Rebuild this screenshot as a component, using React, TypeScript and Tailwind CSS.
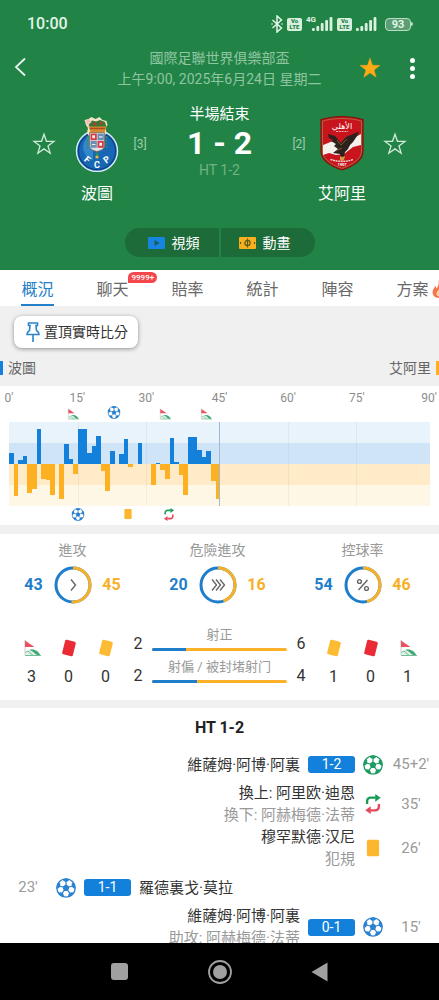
import type { ReactNode } from 'react';

const BLUE = '#1380db';
const AMBER = '#fdb022';

const point = (r: number, deg: number) => {
  const a = ((deg - 90) * Math.PI) / 180;
  return `${(12 + r * Math.cos(a)).toFixed(2)},${(12 + r * Math.sin(a)).toFixed(2)}`;
};

const FIVE = [0, 72, 144, 216, 288];

function Ball({ color, className }: { color: string; className: string }) {
  return (
    <svg viewBox="0 0 24 24" className={className} aria-hidden="true">
      <circle cx="12" cy="12" r="11" fill="#fff" stroke={color} strokeWidth="1.6" />
      <polygon points={FIVE.map((d) => point(4.4, d)).join(' ')} fill={color} />
      {FIVE.map((d) => (
        <g key={d}>
          <polyline points={`${point(4, d)} ${point(8, d)}`} stroke={color} strokeWidth="1.4" fill="none" />
          <polygon
            points={[point(11.4, d - 22), point(8.8, d - 19), point(7.2, d), point(8.8, d + 19), point(11.4, d + 22), point(11.6, d)].join(' ')}
            fill={color}
          />
        </g>
      ))}
    </svg>
  );
}

function Corner({ className }: { className: string }) {
  return (
    <svg viewBox="0 0 18 18" className={className} aria-hidden="true">
      <path d="M2 1v15" stroke="#c9c9c9" strokeWidth="1" />
      <path d="M2 1.5 11.5 8H2z" fill="#e9535f" />
      <path d="M2 16c1-4 4-5.500 7-5.500 4 0 7 2.500 8 6z" fill="#dff0e6" />
      <path d="M6 11c5-1.500 9.500 1 11.500 5.500-2 0-4-.5-5.500-2S9 11.500 6 11z" fill="#3fa873" />
      <path d="M2.500 13.500 5 12l5 4.500M2 16.500h16" stroke="#6fbf95" strokeWidth="1" fill="none" />
    </svg>
  );
}

function Card({ color, className, tilted = false }: { color: string; className: string; tilted?: boolean }) {
  return (
    <svg viewBox="0 0 18 18" className={className} aria-hidden="true">
      <rect x="3.500" y="1.500" width="11" height="15" rx="1.500" fill={color} transform={tilted ? 'rotate(14 9 9)' : undefined} />
    </svg>
  );
}

function Swap({ className }: { className: string }) {
  return (
    <svg viewBox="0 0 20 22" className={className} fill="none" strokeWidth="2.600" aria-hidden="true">
      <path d="M3.500 11V8a4 4 0 0 1 4-4H13" stroke="#199a57" />
      <path d="M12.500 0 18.500 4l-6 4.500z" fill="#199a57" />
      <path d="M16.500 11v3a4 4 0 0 1-4 4H7" stroke="#e54858" />
      <path d="M7.500 13.500 1.500 18l6 4z" fill="#e54858" />
    </svg>
  );
}

function Star({ filled = false }: { filled?: boolean }) {
  return (
    <svg viewBox="0 0 24 24" className="size-6" aria-hidden="true">
      <path
        d="M12 2.200l2.450 7.100 7.500.15-5.980 4.530 2.170 7.180L12 16.870l-6.140 4.290 2.170-7.180L2.050 9.450l7.500-.15z"
        fill={filled ? '#ffa914' : 'none'}
        stroke={filled ? '#ffa914' : '#d3ebdb'}
        strokeWidth={filled ? 0.5 : 1.3}
      />
    </svg>
  );
}

function PortoCrest() {
  return (
    <svg viewBox="0 0 44 56" className="h-14 w-11" role="img" aria-label="波圖">
      <circle cx="22" cy="35" r="20.500" fill="#1767b4" stroke="#d8ecf6" strokeWidth="1.400" />
      <circle cx="22" cy="35" r="18.500" fill="none" stroke="#0d3f86" strokeWidth="1.200" />
      <path d="M8 30a15 15 0 0 1 10-12v26C12 43 8 37 8 30z" fill="#3c93d4" opacity=".75" />
      <path d="M11 9 9.500 4l4-1 3-2 4 2 4-2 3 3 4 1 1 4-2 3 1 5-2 3H14l-2-3 1-5z" fill="#f2e6c6" />
      <path d="M13.500 9 17 4.500l4 1 4-1.500 5 2 1.500 5H15z" fill="#3f7436" />
      <path d="M10 5l4-2 2.500 3L13 9z" fill="#eec0b6" />
      <circle cx="20" cy="8" r="1.300" fill="#c5362e" />
      <circle cx="26" cy="7" r="1.300" fill="#c5362e" />
      <path d="M13.500 10.500h18l-2 6h-14z" fill="#d98a30" />
      <path d="M15 12.500h15" stroke="#a84f1e" strokeWidth="1.500" />
      <path d="M14.500 16.500h15v13c0 3-3 5-7.500 6-4.500-1-7.500-3-7.500-6z" fill="#dfe3e6" stroke="#8a6f45" strokeWidth=".8" />
      <path d="M15.500 17.500h6.300v6.800h-6.300zM22.500 25h6.300v6.800h-6.300z" fill="#d83a45" />
      <path d="M22.500 17.500h6.300v6.800h-6.300zM15.500 25h6.300v6.800h-6.300z" fill="#6d8eb5" />
      <path d="M17.300 19.300h2.700v3h-2.700zM24.300 26.800H27v3h-2.700z" fill="#f5f0e6" />
      <path d="M24 20.800h3.500M17 28.500h3.500" stroke="#e9edf2" strokeWidth="1.200" />
      <path d="M12.500 20v12M31.500 20v12" stroke="#3d8a62" strokeWidth="1.600" strokeDasharray="2 1.500" />
      <path d="M20.500 36.500h3v5h-3z" fill="#2d8a63" />
      <circle cx="22" cy="41" r="1.600" fill="#e9b53c" />
      <g fill="#fff" fontFamily="Roboto, sans-serif" fontWeight="700" fontSize="9" textAnchor="middle">
        <text transform="translate(10.500 46) rotate(38)">F</text>
        <text x="22" y="52">C</text>
        <text transform="translate(33.500 46) rotate(-38)">P</text>
      </g>
    </svg>
  );
}

function AhlyCrest() {
  return (
    <svg viewBox="0 0 44 56" className="h-14 w-11" role="img" aria-label="艾阿里">
      <path d="M1 3.500C14-.2 30-.2 43 3.500V35c0 9-9 15-21 19C10 50 1 44 1 35z" fill="#c8141c" stroke="#7f1612" strokeWidth="1.200" />
      <path d="M2.500 5C14 1.700 30 1.700 41.500 5v30c0 7.500-8 13.500-19.500 17.300C10.500 48.500 2.500 42.500 2.500 35z" fill="none" stroke="#a98249" strokeWidth=".7" />
      <path d="M3 29 13 25l8 4 11-6 9-5v11l-8 2-9 7-8 1-7-2-6 2z" fill="#f4f0ec" />
      <text x="22" y="12.500" fill="#fff" fontFamily="DejaVu Sans, sans-serif" fontSize="8" textAnchor="middle">الأهلي</text>
      <path d="M16 15.500h12" stroke="#efb5b0" strokeWidth="1" strokeDasharray="2 .8" />
      <path d="M8 18 15 20 21 27 26 21 39 15.500 37 20 35 23 33 26 30 29 28 33 25 36 24 41 21 42 20 38 13 37 18 33 14 30 16 28 11 25 13 24 9 22Z" fill="#2c211c" />
      <path d="m17 24 4 5 6-6M16 35l6-3" stroke="#7d5a2c" strokeWidth="1" fill="none" />
      <path d="m20 40 2 1 3-1-1 4-2 1-2-1z" fill="#d29a42" />
      <path d="M10.500 43.500c8 2.500 15 2.500 23 0" stroke="#f7d6d2" strokeWidth="1.400" strokeDasharray="2 .6" fill="none" />
      <text x="22" y="49.500" fill="#fff" fontFamily="Roboto, sans-serif" fontWeight="700" fontSize="4" textAnchor="middle">1907</text>
    </svg>
  );
}

function Volte() {
  return (
    <span className="flex h-[13px] w-[15px] flex-col items-center justify-center rounded-[2px] bg-[#d9f0df] text-[6px] leading-[6px] font-black text-[#228346]">
      <span>Vo</span>
      <span>LTE</span>
    </span>
  );
}

function Signal() {
  return (
    <svg viewBox="0 0 21 14" className="h-3.5 w-[21px]" aria-hidden="true">
      {[3, 5, 8, 11, 14].map((h, i) => (
        <rect key={h} x={i * 4.4} y={14 - h} width="2.800" height={h} rx="1" fill="#d9f0df" />
      ))}
    </svg>
  );
}

function StatusBar() {
  return (
    <div className="flex h-12 items-center justify-between pr-[26px] pl-[27px] text-[#e3f5e8]">
      <span className="text-base font-medium">10:00</span>
      <div className="flex items-center gap-1">
        <svg viewBox="0 0 12 18" className="h-[18px] w-3" fill="none" stroke="currentColor" strokeWidth="1.500" aria-hidden="true">
          <path d="m1.500 5 9 8L6 17V1l4.500 4-9 8" />
          <circle cx="1" cy="9" r=".8" fill="currentColor" stroke="none" />
          <circle cx="11" cy="9" r=".8" fill="currentColor" stroke="none" />
        </svg>
        <Volte />
        <div className="relative ml-1.5">
          <Signal />
          <span className="absolute -top-0.5 -left-1.5 text-[8px] leading-[9px] font-bold">4G</span>
        </div>
        <Volte />
        <Signal />
        <div className="ml-1 flex items-center">
          <span className="flex h-[13px] w-[26px] items-center justify-center rounded-[4px] border border-[#b9dcc4] bg-[#5a9f73] text-[11px] leading-[13px] font-bold">93</span>
          <span className="h-1 w-0.5 rounded-r bg-[#b9dcc4]" />
        </div>
      </div>
    </div>
  );
}

function Team({ name, rank, crest, away = false }: { name: string; rank: string; crest: ReactNode; away?: boolean }) {
  return (
    <div className={away ? 'flex flex-row-reverse' : 'flex'}>
      <button type="button" aria-label={`收藏 ${name}`} className="flex h-20 w-9 items-center justify-center">
        <Star />
      </button>
      <div className="flex w-[70px] flex-col items-center pt-3">
        {crest}
        <span className="mt-2.5 text-base leading-6 text-white">{name}</span>
      </div>
      <span className="flex h-20 w-4 items-center justify-center text-xs text-[#9fcdae]">[{rank}]</span>
    </div>
  );
}

function Header() {
  return (
    <header className="bg-[#228346] pb-[13px]">
      <StatusBar />
      <div className="grid grid-cols-[88px_1fr_88px] items-start">
        <button type="button" aria-label="返回" className="flex h-[38px] w-10 items-center justify-center">
          <svg viewBox="0 0 12 20" className="h-5 w-3" fill="none" stroke="#e8f6ec" strokeWidth="1.800" aria-hidden="true">
            <path d="m11 1.500-9 8.500 9 8.500" />
          </svg>
        </button>
        <div className="text-center text-sm leading-[21px] whitespace-nowrap text-[#8fc5a1]">
          <div>國際足聯世界俱樂部盃</div>
          <div>上午9:00, 2025年6月24日 星期二</div>
        </div>
        <div className="flex h-10 items-center justify-end gap-5 pr-[17px]">
          <button type="button" aria-label="收藏比賽"><Star filled /></button>
          <button type="button" aria-label="更多" className="flex w-5 flex-col items-center gap-[3px]">
            <span className="size-[5px] rounded-full bg-white" />
            <span className="size-[5px] rounded-full bg-white" />
            <span className="size-[5px] rounded-full bg-white" />
          </button>
        </div>
      </div>
      <div className="mt-3.5 flex justify-between px-[26px]">
        <Team name="波圖" rank="3" crest={<PortoCrest />} />
        <div className="flex flex-col items-center">
          <span className="text-[15px] leading-5 text-white">半場結束</span>
          <span className="text-[32px] leading-[38px] font-bold whitespace-nowrap text-white">1 - 2</span>
          <span className="text-sm leading-4 text-[#72b287]">HT 1-2</span>
        </div>
        <Team name="艾阿里" rank="2" crest={<AhlyCrest />} away />
      </div>
      <div className="mt-[22px] flex justify-center gap-0.5 text-sm text-white">
        <button type="button" className="flex h-[29px] w-[94px] items-center gap-[7px] rounded-l-full bg-[#1c6b38] pl-[23px]">
          <svg viewBox="0 0 17 12" className="h-3 w-[17px]" aria-hidden="true">
            <rect width="17" height="12" rx="1" fill="#1685e2" />
            <path d="m6.500 3 5 3-5 3z" fill="#1c5a55" />
          </svg>
          視頻
        </button>
        <button type="button" className="flex h-[29px] w-[94px] items-center gap-[7px] rounded-r-full bg-[#1c6b38] pl-[18px]">
          <svg viewBox="0 0 17 12" className="h-3 w-[17px]" fill="none" stroke="#5a5a17" strokeWidth="1.200" aria-hidden="true">
            <rect width="17" height="12" rx="1" fill="#f9b01e" stroke="none" />
            <circle cx="8.500" cy="6" r="2.600" />
            <path d="M8.500 1.500v9M1.500 5v2M15.500 5v2" />
          </svg>
          動畫
        </button>
      </div>
    </header>
  );
}

const TABS = ['概況', '聊天', '賠率', '統計', '陣容', '方案'];

function Tabs() {
  return (
    <nav className="flex h-9 shrink-0 overflow-hidden bg-white">
      {TABS.map((tab, i) => (
        <a
          key={tab}
          href={`#tab-${i}`}
          className={
            i === 0
              ? 'flex w-[75px] shrink-0 justify-center text-base leading-10 text-[#2480c8]'
              : 'flex w-[75px] shrink-0 justify-center text-base leading-10 text-[#686868]'
          }
        >
          <span className={i === 0 ? 'relative h-9 border-b-2 border-[#2480c8]' : 'relative'}>
            {tab}
            {i === 1 && (
              <span className="absolute top-0.5 left-8 rounded-t-full rounded-r-full bg-[#f3474c] px-[3px] text-[8px] leading-[11px] font-medium text-white">9999+</span>
            )}
            {i === 5 && (
              <svg viewBox="0 0 14 18" className="absolute top-2.5 left-9 h-[18px] w-3.5" aria-hidden="true">
                <path d="M6.500 0c1 3 5 5 6.500 9s-1 9-6 9-7.500-4-6-8c.5-1.500 1.500-2 2-4 1 .8 1.300 1.500 1.500 2.500C6.500 6.500 7 3 6.500 0z" fill="#f4764f" />
                <path d="M7 9c1 2 3 3 2.500 5.500S4.500 17 4.500 14 6.500 11 7 9z" fill="#ffd3a5" />
              </svg>
            )}
          </span>
        </a>
      ))}
    </nav>
  );
}

// Attack intensity per minute: positive for the home side, negative for the away side.
const MOMENTUM = [
  11, -32, 4, 8, -29, -25, 35, -15, -16, -31, 0, -35, 20, 5, -10, 35, 35, 11, 18, 28, -7, -27, 13,
  0, 10, 25, -3, 0, 21, 0, 0, -21, 1, -6, -15, 26, 2, -11, -31, 27, 27, 14, 7, 13, -17, -35,
];

const AXIS = [
  { label: "0'", at: 0 },
  { label: "15'", at: 16.2 },
  { label: "30'", at: 32.6 },
  { label: "45'", at: 50 },
  { label: "60'", at: 66.3 },
  { label: "75'", at: 82.6 },
  { label: "90'", at: 99.8 },
];

function Marker({ at, children }: { at: number; children: ReactNode }) {
  return (
    <span className="absolute top-0 -translate-x-1/2" style={{ left: `${at}%` }}>
      {children}
    </span>
  );
}

function Momentum() {
  return (
    <section className="overflow-hidden bg-white px-[9px] pt-[5px] pb-[3px]">
      <div className="relative h-[15px] text-xs leading-[14px] text-[#8c8c8c]">
        {AXIS.map((a) => (
          <Marker key={a.label} at={a.at}>{a.label}</Marker>
        ))}
      </div>
      <div className="relative h-4">
        <Marker at={15.2}><Corner className="mt-0.5 size-3" /></Marker>
        <Marker at={25}><Ball color="#2a7fcb" className="size-[13px]" /></Marker>
        <Marker at={37}><Corner className="mt-0.5 size-3" /></Marker>
        <Marker at={46.8}><Corner className="mt-0.5 size-3" /></Marker>
      </div>
      <svg viewBox="0 0 421 84" preserveAspectRatio="none" className="block h-[84px] w-full" shapeRendering="crispEdges" role="img" aria-label="攻勢走勢">
        <rect width="421" height="21" fill="#e8f3fb" />
        <rect y="21" width="421" height="21" fill="#cfe4f7" />
        <rect y="42" width="421" height="21" fill="#ffebc8" />
        <rect y="63" width="421" height="21" fill="#fff7e6" />
        {[69, 137, 279, 347].map((x) => (
          <rect key={x} x={x} width="1" height="84" fill="#8a9aa8" opacity=".12" />
        ))}
        {MOMENTUM.map((v, i) => {
          const x0 = Math.round(i * 4.59);
          const x1 = Math.round((i + 1) * 4.59);
          return v === 0 ? null : (
            <rect key={i} x={x0} y={v > 0 ? 42 - v : 42} width={x1 - x0} height={Math.abs(v)} fill={v > 0 ? BLUE : AMBER} />
          );
        })}
        <rect x="210" width="1" height="84" fill="#9dbbd6" />
      </svg>
      <div className="relative mt-0.5 h-3.5">
        <Marker at={16.4}><Ball color="#2a7fcb" className="size-[13px]" /></Marker>
        <Marker at={28.3}><Card color="#fcb62f" className="size-3" /></Marker>
        <Marker at={38}><Swap className="size-[13px]" /></Marker>
      </div>
    </section>
  );
}

function Ring({ home, away, kind }: { home: number; away: number; kind: 'attack' | 'danger' | 'possession' }) {
  const c = 2 * Math.PI * 17;
  const awayLen = (c * away) / (home + away);
  return (
    <svg viewBox="0 0 38 38" className="size-[38px]" fill="none" aria-hidden="true">
      <circle cx="19" cy="19" r="17" stroke="#1f7ecb" strokeWidth="3" />
      <circle cx="19" cy="19" r="17" stroke="#f7b128" strokeWidth="3" strokeDasharray={`${awayLen} ${c}`} transform="rotate(-90 19 19)" />
      <g stroke="#666" strokeWidth="1.400">
        {kind === 'attack' && <path d="m17 13.500 4.500 5.500-4.500 5.500" />}
        {kind === 'danger' && <path d="m13 13.500 4.500 5.500-4.500 5.500M17 13.500l4.500 5.500-4.500 5.500M21 13.500l4.500 5.500-4.500 5.500" />}
        {kind === 'possession' && (
          <>
            <path d="m23.500 14-9 10" />
            <circle cx="15.500" cy="15.500" r="1.900" />
            <circle cx="22.500" cy="22.500" r="1.900" />
          </>
        )}
      </g>
    </svg>
  );
}

const RINGS = [
  { title: '進攻', home: 43, away: 45, kind: 'attack' },
  { title: '危險進攻', home: 20, away: 16, kind: 'danger' },
  { title: '控球率', home: 54, away: 46, kind: 'possession' },
] as const;

function Tally({ icon, value }: { icon: ReactNode; value: number }) {
  return (
    <div className="flex w-[37px] flex-col items-center justify-between">
      <span className="flex h-8 items-end">{icon}</span>
      <span className="leading-6">{value}</span>
    </div>
  );
}

function Duel({ label, home, away, share }: { label: string; home: number; away: number; share: number }) {
  return (
    <div className="flex h-8">
      <span className="w-7 pt-[7px] text-center leading-6">{home}</span>
      <div className="flex-1 text-center text-[13px] leading-5 whitespace-nowrap text-[#999]">
        {label}
        <div className="mt-[3px] flex h-[3px] overflow-hidden rounded-full bg-[#fbb12a]">
          <span className="bg-[#1f7ecb]" style={{ width: `${share}%` }} />
        </div>
      </div>
      <span className="w-7 pt-[7px] text-center leading-6">{away}</span>
    </div>
  );
}

function Stats() {
  return (
    <section className="mt-[9px] bg-white pt-1.5 pb-[11px] text-base text-[#333]">
      <div className="grid grid-cols-3 pr-1">
        {RINGS.map((r) => (
          <div key={r.title} className="flex flex-col items-center">
            <h3 className="text-sm leading-5 text-[#999]">{r.title}</h3>
            <div className="mt-1.5 flex items-center gap-2.5 font-bold">
              <span className="w-5 text-center text-[#1f7ecb]">{r.home}</span>
              <Ring home={r.home} away={r.away} kind={r.kind} />
              <span className="w-5 text-center text-[#f7b128]">{r.away}</span>
            </div>
          </div>
        ))}
      </div>
      <div className="mt-[21px] flex px-[13px]">
        <div className="flex h-16">
          <Tally icon={<Corner className="size-[18px]" />} value={3} />
          <Tally icon={<Card color="#ea2b35" className="size-[18px]" tilted />} value={0} />
          <Tally icon={<Card color="#fdba33" className="size-[18px]" tilted />} value={0} />
        </div>
        <div className="flex-1">
          <Duel label="射正" home={2} away={6} share={25} />
          <Duel label="射偏 / 被封堵射门" home={2} away={4} share={33.3} />
        </div>
        <div className="flex h-16">
          <Tally icon={<Card color="#fdba33" className="size-[18px]" tilted />} value={1} />
          <Tally icon={<Card color="#ea2b35" className="size-[18px]" tilted />} value={0} />
          <Tally icon={<Corner className="size-[18px]" />} value={1} />
        </div>
      </div>
    </section>
  );
}

interface MatchEvent {
  time: string;
  icon: ReactNode;
  text: string;
  note?: string;
  score?: string;
  home?: boolean;
}

const EVENTS: MatchEvent[] = [
  { time: "45+2'", icon: <Ball color="#1c9d63" className="size-5" />, text: '維薩姆·阿博·阿裏', score: '1-2' },
  { time: "35'", icon: <Swap className="size-5" />, text: '換上: 阿里欧·迪恩', note: '換下: 阿赫梅德·法蒂' },
  { time: "26'", icon: <Card color="#fdb62f" className="size-5" />, text: '穆罕默德·汉尼', note: '犯規' },
  { time: "23'", icon: <Ball color="#2a82d0" className="size-5" />, text: '羅德裏戈·莫拉', score: '1-1', home: true },
  { time: "15'", icon: <Ball color="#2a82d0" className="size-5" />, text: '維薩姆·阿博·阿裏', note: '助攻: 阿赫梅德·法蒂', score: '0-1' },
];

function EventRow({ event }: { event: MatchEvent }) {
  return (
    <li className={event.home ? 'flex min-h-[35px] flex-row-reverse items-center justify-end gap-2' : 'flex min-h-[35px] items-center justify-end gap-2'}>
      <div className="text-right text-[15px] leading-[22px] text-[#333]">
        <div>{event.text}</div>
        {event.note && <div className="text-[#999]">{event.note}</div>}
      </div>
      {event.score && (
        <span className="h-[17px] w-[47px] rounded-[3px] bg-[#1380db] text-center text-sm leading-[17px] text-white">{event.score}</span>
      )}
      <div className={event.home ? 'flex flex-row-reverse items-center' : 'flex items-center'}>
        <span className="flex w-5 justify-center">{event.icon}</span>
        <span className="w-14 text-center text-[15px] text-[#999]">{event.time}</span>
      </div>
    </li>
  );
}

export default function App() {
  return (
    <div lang="zh-Hant" className="flex h-screen flex-col bg-[#f0f0f0] font-[Roboto,'Noto_Sans_CJK_TC','Noto_Sans_CJK_SC',sans-serif]">
      <Header />
      <Tabs />
      <main className="min-h-0 flex-1 overflow-hidden">
        <button type="button" className="mt-2.5 ml-3.5 flex h-8 items-center gap-1 rounded-lg bg-white pr-2.5 pl-3 text-sm text-[#333] shadow-[0_1px_4px_rgba(0,0,0,0.4)]">
          <svg viewBox="0 0 14 20" className="h-5 w-3.5" fill="none" stroke="#2a84cc" strokeWidth="1.600" aria-hidden="true">
            <path d="M2.500 1h9v2.500H10l.5 5c1.500.8 2.500 2 2.500 4H1c0-2 1-3.200 2.500-4l.5-5H2.500zM7 12.500V20" />
          </svg>
          置頂實時比分
        </button>
        <div className="mt-2.5 mb-2 flex h-5 items-center justify-between text-sm text-[#666]">
          <span className="flex items-center gap-[5px]">
            <span className="h-3.5 w-[3px] bg-[#1380db]" />
            波圖
          </span>
          <span className="flex items-center gap-[5px]">
            艾阿里
            <span className="h-3.5 w-[3px] bg-[#fdb022]" />
          </span>
        </div>
        <Momentum />
        <Stats />
        <section className="mt-2 bg-white">
          <h2 className="text-center text-base leading-[39px] font-bold text-[#222]">HT 1-2</h2>
          <ul>
            {EVENTS.map((e) => (
              <EventRow key={e.time} event={e} />
            ))}
          </ul>
        </section>
      </main>
      <nav className="flex h-[57px] shrink-0 items-center justify-center gap-20 bg-black">
        <button type="button" aria-label="最近" className="flex size-5 items-center justify-center">
          <span className="size-[17px] rounded-[3px] bg-[#a0a0a0]" />
        </button>
        <button type="button" aria-label="主頁" className="flex size-5 items-center justify-center">
          <svg viewBox="0 0 24 24" className="size-6 shrink-0" aria-hidden="true">
            <circle cx="12" cy="12" r="11" fill="none" stroke="#a0a0a0" strokeWidth="1.800" />
            <circle cx="12" cy="12" r="7" fill="#a0a0a0" />
          </svg>
        </button>
        <button type="button" aria-label="返回" className="flex size-5 items-center justify-center">
          <svg viewBox="0 0 17 20" className="h-5 w-[17px]" aria-hidden="true">
            <path d="M16.500 .5v19L.5 10z" fill="#a0a0a0" />
          </svg>
        </button>
      </nav>
    </div>
  );
}
